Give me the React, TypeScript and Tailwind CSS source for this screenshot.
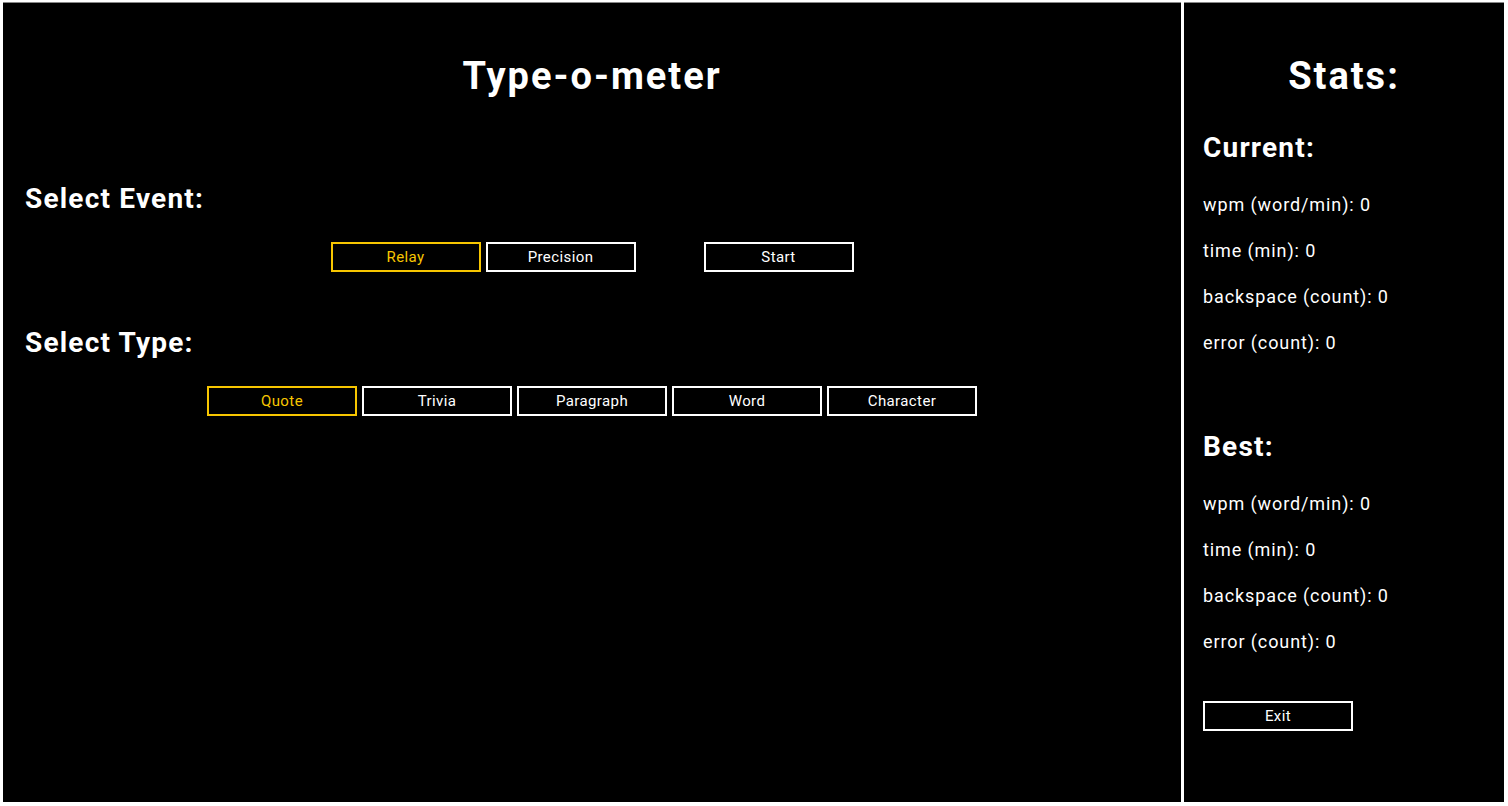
import React, { useState } from "react";

const font = { fontFamily: "Roboto, 'Liberation Sans', sans-serif" };

function Choice({
  label,
  active,
  onClick,
}: {
  label: string;
  active?: boolean;
  onClick?: () => void;
}) {
  return (
    <button
      type="button"
      onClick={onClick}
      className={`h-[30px] w-[150px] border-2 bg-black text-[15px] leading-none tracking-[0.4px] ${
        active ? "border-[#f7c600] text-[#f7c600]" : "border-white text-white"
      }`}
    >
      {label}
    </button>
  );
}

function StatBlock({ title, className }: { title: string; className?: string }) {
  const rows = ["wpm (word/min): 0", "time (min): 0", "backspace (count): 0", "error (count): 0"];
  return (
    <div className={className}>
      <h2 className="text-[28px] font-bold leading-[34px] tracking-[1.2px]">{title}</h2>
      <ul className="mt-[28px] flex flex-col gap-[22px]">
        {rows.map((r) => (
          <li key={r} className="text-[18px] leading-[24px] tracking-[0.9px]">
            {r}
          </li>
        ))}
      </ul>
    </div>
  );
}

export default function App() {
  const [event, setEvent] = useState("Relay");
  const [kind, setKind] = useState("Quote");

  return (
    <div style={font} className="flex h-[806px] w-full gap-[3px] bg-white pb-[4px] pl-[3px] pr-[4px] pt-[2px] text-white">
      <main className="flex flex-1 flex-col border-t border-[#888] bg-black pt-[50px]">
        <h1 className="text-center text-[38px] font-bold leading-[46px] tracking-[2px]">Type-o-meter</h1>

        <h2 className="ml-[22px] mt-[83px] text-[28px] font-bold leading-[34px] tracking-[1.2px]">Select Event:</h2>
        <div className="mt-[26px] flex justify-center">
          <div className="flex gap-[5px]">
            {["Relay", "Precision"].map((e) => (
              <Choice key={e} label={e} active={event === e} onClick={() => setEvent(e)} />
            ))}
          </div>
          <div className="ml-[68px]">
            <Choice label="Start" />
          </div>
        </div>

        <h2 className="ml-[22px] mt-[54px] text-[28px] font-bold leading-[34px] tracking-[1.2px]">Select Type:</h2>
        <div className="mt-[26px] flex justify-center gap-[5px]">
          {["Quote", "Trivia", "Paragraph", "Word", "Character"].map((k) => (
            <Choice key={k} label={k} active={kind === k} onClick={() => setKind(k)} />
          ))}
        </div>
      </main>

      <aside className="flex w-[320px] flex-col border-t border-[#888] bg-black pl-[19px] pt-[50px]">
        <h1 className="-ml-[19px] text-center text-[38px] font-bold leading-[46px] tracking-[2px]">Stats:</h1>
        <StatBlock title="Current:" className="mt-[32px]" />
        <StatBlock title="Best:" className="mt-[75px]" />
        <div className="mt-[47px]">
          <button type="button" className="h-[30px] w-[150px] border-2 border-white bg-black text-[15px] leading-none tracking-[0.4px] text-white">
            Exit
          </button>
        </div>
      </aside>
    </div>
  );
}
